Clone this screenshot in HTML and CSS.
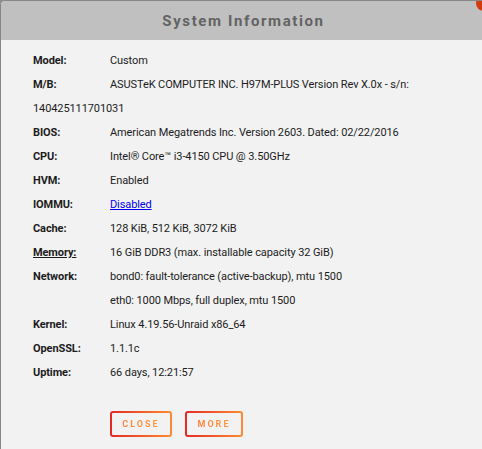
FILE: index.html
```html
<!DOCTYPE html>
<html lang="en">
  <head>
    <meta charset="UTF-8" />
    <meta name="viewport" content="width=device-width, initial-scale=1.0" />
    <title>System Information</title>
    <link rel="stylesheet" href="styles.css">
  </head>
  <body>
    <section class="dialog">
      <span class="dialog-x"></span>
      <div class="dialog-title">System Information</div>
      <div class="dialog-body">
        <div class="info">
          <div class="label">Model:</div><div class="value">Custom</div>
          <div class="label">M/B:</div><div class="value">ASUSTeK COMPUTER INC. H97M-PLUS Version Rev X.0x - s/n:</div>
          <div class="wrap">140425111701031</div>
          <div class="label">BIOS:</div><div class="value">American Megatrends Inc. Version 2603. Dated: 02/22/2016</div>
          <div class="label">CPU:</div><div class="value">Intel&reg; Core&trade; i3-4150 CPU @ 3.50GHz</div>
          <div class="label">HVM:</div><div class="value">Enabled</div>
          <div class="label">IOMMU:</div><div class="value"><a href="#">Disabled</a></div>
          <div class="label">Cache:</div><div class="value">128 KiB, 512 KiB, 3072 KiB</div>
          <div class="label"><u>Memory:</u></div><div class="value">16 GiB DDR3 (max. installable capacity 32 GiB)</div>
          <div class="label">Network:</div><div class="value">bond0: fault-tolerance (active-backup), mtu 1500</div>
          <div class="label"></div><div class="value">eth0: 1000 Mbps, full duplex, mtu 1500</div>
          <div class="label">Kernel:</div><div class="value">Linux 4.19.56-Unraid x86_64</div>
          <div class="label">OpenSSL:</div><div class="value">1.1.1c</div>
          <div class="label">Uptime:</div><div class="value">66 days, 12:21:57</div>
        </div>
        <div class="buttons">
          <button class="btn btn-close"><span>Close</span></button>
          <button class="btn btn-more"><span>More</span></button>
        </div>
      </div>
    </section>
  </body>
</html>
```

FILE: styles.css
```css
* {
  margin: 0;
  padding: 0;
  box-sizing: border-box;
}
html,
body {
  height: 100%;
  overflow: hidden;
}
body {
  background: #8c8c8c;
  font-family: Roboto, "Noto Sans", sans-serif;
  font-size: 11px;
  letter-spacing: -0.1px;
  color: #1c1c1c;
}
.dialog {
  position: relative;
  width: 520px;
  height: 100%;
  background: #f2f2f2;
  border-top: 1px solid #868686;
  border-left: 1px solid #868686;
  border-top-left-radius: 5px;
  overflow: hidden;
}
.dialog-x {
  position: absolute;
  top: -5px;
  left: 475px;
  width: 15px;
  height: 15px;
  border-radius: 50%;
  background: #d23c0c;
}
.dialog-title {
  height: 39px;
  background: #c0c0c0;
  color: #636363;
  font-weight: 700;
  font-size: 15px;
  letter-spacing: 1.6px;
  line-height: 41px;
  text-align: center;
  padding-right: 34px;
}
.dialog-body {
  padding: 9px 0 0 32px;
}
.info {
  display: grid;
  grid-template-columns: 77px 1fr;
  line-height: 24px;
}
.label {
  font-weight: 700;
}
.wrap {
  grid-column: 1/3;
}
.value a {
  color: #0000ee;
}
.buttons {
  display: flex;
  gap: 13px;
  margin: 26px 0 0 77px;
}
.btn {
  height: 26px;
  border: 2px solid transparent;
  border-radius: 3px;
  background: linear-gradient(#f2f2f2, #f2f2f2) padding-box,
    linear-gradient(90deg, #e22828, #ff8b2f) border-box;
  font-family: Roboto, sans-serif;
  font-size: 9px;
  font-weight: 700;
  letter-spacing: 2px;
  text-transform: uppercase;
}
.btn span {
  background: linear-gradient(90deg, #ff7f3c, #ff9a40);
  -webkit-background-clip: text;
  background-clip: text;
  color: transparent;
}
.btn-close {
  width: 62px;
}
.btn-more {
  width: 58px;
}
```
